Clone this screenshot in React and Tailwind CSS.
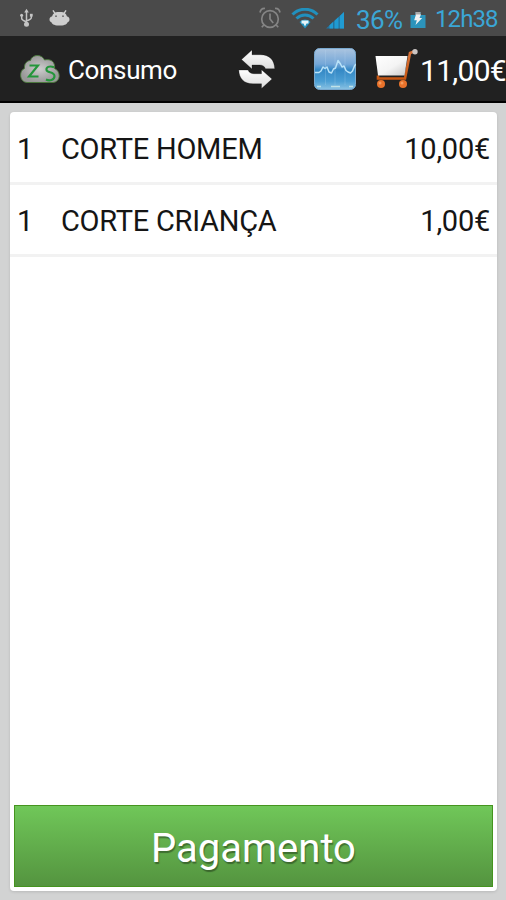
import React from "react";

function UsbIcon() {
  return (
    <svg className="ml-[19px] h-5 w-[15px] shrink-0" viewBox="0 0 15 20" fill="none" stroke="#c4c4c4" strokeWidth="1.5">
      <path d="M7.5 4v12M2.7 7.5v3c0 1.5 1.5 2 4.8 3.6M12.3 7.5v2.2c0 1.4-1.5 2-4.8 3.2" />
      <path d="M7.5 0.8l2.3 3.8H5.2z" fill="#c4c4c4" stroke="none" />
      <circle cx="7.5" cy="16.3" r="2.5" fill="#c4c4c4" stroke="none" />
      <circle cx="2.6" cy="7.3" r="1.5" fill="#c4c4c4" stroke="none" />
      <path d="M10.9 5.8h2.8v2.8h-2.8z" fill="#c4c4c4" stroke="none" />
    </svg>
  );
}

function DroidIcon() {
  return (
    <svg className="ml-[15px] h-4 w-[21px] shrink-0" viewBox="0 0 21 16">
      <path d="M4.300 .8l1.700 2.500M16.700 .8L15 3.300" stroke="#cecece" strokeWidth="1.400" strokeLinecap="round" />
      <path d="M4 4.200C5.500 2.200 8 2 10.500 2s5 .2 6.500 2.200l1 2.300c3 0 3.400 5 .6 5.700-.6 2.500-4.300 3.300-8.100 3.300s-7.500-.8-8.100-3.300C-.4 11.500 0 6.500 3 6.500z" fill="#cecece" />
      <circle cx="7" cy="6.200" r=".9" fill="#666" />
      <circle cx="14" cy="6.200" r=".9" fill="#666" />
    </svg>
  );
}

function AlarmIcon() {
  return (
    <svg className="ml-[189px] h-[22px] w-[22px] shrink-0" viewBox="0 0 22 22" fill="none" stroke="#858585" strokeWidth="1.700">
      <circle cx="11" cy="12" r="8.300" />
      <path d="M11 6.500V12l3.200 4M1 5.500C1.500 3 3.500 1.300 6 1.500M21 5.500c-.5-2.500-2.500-4.200-5-4M4.800 18l-2 2.200M17.200 18l2 2.200" />
    </svg>
  );
}

function WifiIcon() {
  return (
    <svg className="ml-[10px] h-[21px] w-[28px] shrink-0" viewBox="0 0 28 21" fill="none">
      <path d="M1.500 6.500C8.500-.5 19.500-.5 26.500 6.500" stroke="#2190bd" strokeWidth="3" />
      <path d="M5.500 10.500c5-4.800 12-4.800 17 0" stroke="#2190bd" strokeWidth="3" />
      <path d="M8.500 14c3.500-3.300 7.500-3.300 11 0L14 20.500z" fill="#2190bd" />
      <path d="M10.500 12.500h7v3h-2L14 18.500l-1.500-3h-2z" fill="#e6f5fa" />
    </svg>
  );
}

function SignalIcon() {
  return (
    <svg className="ml-[7px] mt-1 h-[17px] w-[18px] shrink-0" viewBox="0 0 18 17">
      <path d="M0 16.500L18 0v16.500z" fill="#23739f" />
      <path d="M3.500 13.300l3.500-3.200v6.400H3.500zM8.500 8.700l4-3.600v11.400h-4zM13.800 3.900L18 0v16.500h-4.200z" fill="#209bd2" />
    </svg>
  );
}

function BatteryIcon() {
  return (
    <svg className="ml-[6px] mt-[3px] h-4 w-4 shrink-0" viewBox="0 0 16 16">
      <path d="M5.500 0h5v3h5v13H.5V3h5z" fill="#2c94bb" />
      <path d="M5.500 0h5v3h-5z" fill="#aaa" />
      <path d="M6 2.500h5L9.500 6h2.700L5.500 13l1.300-4.700H4.200z" fill="#f2f2f2" />
    </svg>
  );
}

function CloudLogo() {
  return (
    <svg className="ml-5 h-[30px] w-[41px] shrink-0" viewBox="0 0 41 30">
      <defs>
        <radialGradient id="cloud">
          <stop offset="0" stopColor="#cccccc" />
          <stop offset="1" stopColor="#999999" />
        </radialGradient>
      </defs>
      <path d="M7 28.500C-.5 28.500-1.500 16.500 4.500 14.500 4 9 7.500 6.500 10.500 6.500 12 0 22-.2 24.500 6c6.500-1.500 11 2 10 8.500 6.500 2.500 6.500 13.500-1.500 14z" fill="url(#cloud)" stroke="#4a7a3a" strokeWidth=".9" />
      <path d="M9.500 11.500h8.500l-9 11h9.500" fill="none" stroke="#23963a" strokeWidth="2.100" />
      <path d="M34 13.200c-5-1.800-8 .1-7.500 2.800.5 3 8 1.500 8 6 0 4-5 5.500-8.500 3.500" fill="none" stroke="#23963a" strokeWidth="2.100" />
    </svg>
  );
}

function RefreshIcon() {
  return (
    <svg className="h-10 w-[38px] shrink-0" viewBox="0 0 38 40">
      <defs>
        <linearGradient id="arrows" x1="0" y1="0" x2="0" y2="1">
          <stop offset="0" stopColor="#fff" />
          <stop offset="1" stopColor="#dcdcdc" />
        </linearGradient>
      </defs>
      <g fill="url(#arrows)" stroke="#000" strokeOpacity=".5" strokeWidth=".5">
        <path d="M3.500 10.500L14 1v4.700h8.500C31.500 5.700 36.500 11 36.700 19.700H27.500c-1-2.500-3-3.700-6-3.700H14v4z" />
        <path d="M34 30L23.500 39.500v-4.700H15C6 34.800 1 29.500.8 21H10c1 2.500 3 3.700 6 3.700h7.500v-4z" />
      </g>
    </svg>
  );
}

function ChartIcon() {
  return (
    <svg className="ml-[38px] h-[42px] w-[42px] shrink-0" viewBox="0 0 42 42">
      <defs>
        <linearGradient id="sky" x1="0" y1="0" x2="0" y2="1">
          <stop offset="0" stopColor="#abc4df" />
          <stop offset=".38" stopColor="#74a7d8" />
          <stop offset=".52" stopColor="#3488c5" />
          <stop offset=".8" stopColor="#4c9fd4" />
          <stop offset="1" stopColor="#8cc3e3" />
        </linearGradient>
      </defs>
      <rect x=".5" y=".5" width="41" height="41" rx="5" fill="url(#sky)" stroke="#79a9cf" />
      <path d="M11.500 2v35M21 2v35M31 2v35" stroke="#c0def4" strokeOpacity=".22" />
      <path d="M1 24.500h4l2-1.500 2-4 2 1.500 2-1.500 2 5 2.500 1 2-4 2-1 2.500-7.500 2.500 3.500 1.500 3 2-1 2 4.500 2 1.500 2.500 1 2-2 2-5 1.500-2" fill="none" stroke="#b9e2f8" strokeWidth="1.500" strokeLinejoin="round" />
      <path d="M3 38.500h4M17 38.500h9M35 38.500h4" stroke="#bfe2e8" strokeWidth="1.600" />
    </svg>
  );
}

function CartIcon() {
  return (
    <svg className="ml-[18px] h-[41px] w-[44px] shrink-0" viewBox="0 0 44 41">
      <defs>
        <linearGradient id="basket" x1="0" y1="0" x2="1" y2="1">
          <stop offset="0" stopColor="#fff" />
          <stop offset=".55" stopColor="#f4f4f4" />
          <stop offset="1" stopColor="#c8c8c8" />
        </linearGradient>
        <linearGradient id="frame" x1="0" y1="0" x2="0" y2="1">
          <stop offset="0" stopColor="#d9743b" />
          <stop offset="1" stopColor="#c75612" />
        </linearGradient>
      </defs>
      <path d="M40 3.500l-4 1.500-5 25.500H4v-3" fill="none" stroke="url(#frame)" strokeWidth="2.600" />
      <path d="M1.500 8h32l-3 19.500H4z" fill="url(#basket)" />
      <circle cx="41" cy="3.700" r="2.700" fill="#cbc5c3" />
      <circle cx="7" cy="36" r="4" fill="#e8722b" />
      <circle cx="29" cy="36" r="4" fill="#e8722b" />
      <circle cx="6" cy="35" r="1.500" fill="#f59c5e" />
      <circle cx="28" cy="35" r="1.500" fill="#f59c5e" />
    </svg>
  );
}

function StatusBar() {
  return (
    <div className="flex h-9 items-center bg-[#4a4a4a] whitespace-nowrap text-[#3ba6d6]">
      <UsbIcon />
      <DroidIcon />
      <AlarmIcon />
      <WifiIcon />
      <SignalIcon />
      <span className="ml-[12px] w-[48px] pt-[3px] text-[26px] leading-none tracking-[-0.600px]">36%</span>
      <BatteryIcon />
      <span className="ml-[9px] pt-[2px] text-[24px] leading-none tracking-[-0.900px]">12h38</span>
    </div>
  );
}

function ActionBar() {
  return (
    <header className="flex h-[67px] items-center border-b-2 border-black bg-[#212121] whitespace-nowrap text-white">
      <CloudLogo />
      <h1 className="ml-[7px] w-[170px] pt-[3px] text-[26px] leading-none tracking-[-0.350px]">Consumo</h1>
      <RefreshIcon />
      <ChartIcon />
      <CartIcon />
      <span className="ml-[2px] pt-[4px] text-[30px] leading-none tracking-[-0.700px]">11,00€</span>
    </header>
  );
}

const items = [
  { quantity: 1, name: "CORTE HOMEM", price: "10,00€" },
  { quantity: 1, name: "CORTE CRIANÇA", price: "1,00€" },
];

export default function App() {
  return (
    <div className="flex h-[900px] w-[506px] flex-col overflow-hidden bg-[#d2d3d3] font-[Roboto,sans-serif]">
      <StatusBar />
      <ActionBar />
      <main className="mt-[9px] mr-[9px] ml-[10px] flex h-[779px] flex-col rounded-[4px] bg-white px-1 pb-1 shadow-[0_1px_3px_rgba(0,0,0,0.12)]">
        <ul className="-mx-1 pt-px">
          {items.map((item) => (
            <li key={item.name} className="flex h-[72px] items-center border-b-[3px] border-[#f2f2f2] pr-[7px] pl-[7px] text-[29px] leading-none whitespace-nowrap text-[#151515]">
              <span className="w-[44px] pt-[3px]">{item.quantity}</span>
              <span className="grow pt-[3px] tracking-[-0.260px]">{item.name}</span>
              <span className="pt-[3px] tracking-[-0.250px]">{item.price}</span>
            </li>
          ))}
        </ul>
        <button className="mt-auto flex h-[82px] items-center justify-center border border-[#45941f] bg-linear-to-b from-[#70c759] to-[#54943f] pt-[5px] text-[40px] leading-none text-white [text-shadow:1px_2px_1px_rgba(0,0,0,0.350)]">
          Pagamento
        </button>
      </main>
    </div>
  );
}
